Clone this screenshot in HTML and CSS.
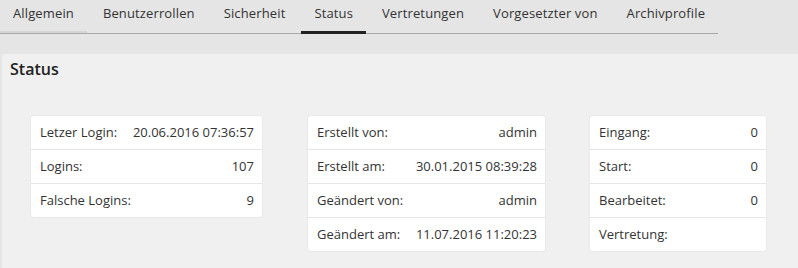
FILE: index.html
```html
<!DOCTYPE html>
<html lang="de">
<head>
<meta charset="utf-8">
<title>Status</title>
<link rel="stylesheet" href="styles.css">
</head>
<body>
<ul class="tabs">
  <li class="tab tab-hover">Allgemein</li>
  <li class="tab">Benutzerrollen</li>
  <li class="tab">Sicherheit</li>
  <li class="tab tab-active">Status</li>
  <li class="tab">Vertretungen</li>
  <li class="tab">Vorgesetzter von</li>
  <li class="tab">Archivprofile</li>
</ul>
<section class="panel">
  <h2 class="panel-title">Status</h2>
  <div class="cards">
    <div class="card card-login">
      <div class="row"><span class="label">Letzer Login:</span><span class="value">20.06.2016 07:36:57</span></div>
      <div class="row"><span class="label">Logins:</span><span class="value">107</span></div>
      <div class="row"><span class="label">Falsche Logins:</span><span class="value">9</span></div>
    </div>
    <div class="card card-meta">
      <div class="row"><span class="label">Erstellt von:</span><span class="value">admin</span></div>
      <div class="row"><span class="label">Erstellt am:</span><span class="value">30.01.2015 08:39:28</span></div>
      <div class="row"><span class="label">Geändert von:</span><span class="value">admin</span></div>
      <div class="row"><span class="label">Geändert am:</span><span class="value">11.07.2016 11:20:23</span></div>
    </div>
    <div class="card card-tasks">
      <div class="row"><span class="label">Eingang:</span><span class="value">0</span></div>
      <div class="row"><span class="label">Start:</span><span class="value">0</span></div>
      <div class="row"><span class="label">Bearbeitet:</span><span class="value">0</span></div>
      <div class="row"><span class="label">Vertretung:</span><span class="value"></span></div>
    </div>
  </div>
</section>
</body>
</html>
```
FILE: styles.css
```css
html, body {
  margin: 0;
  padding: 0;
}
body {
  background: #e5e5e5;
  font-family: "Open Sans", "DejaVu Sans", sans-serif;
  font-size: 13px;
  color: #333;
  width: 798px;
  height: 268px;
  overflow: hidden;
}
.tabs {
  list-style: none;
  margin: 0;
  padding: 0;
  display: inline-flex;
  gap: 3px;
  border-bottom: 1px solid #a8a8a8;
  height: 33px;
}
.tab {
  padding: 4px 13px 0;
  height: 27px;
  line-height: 18px;
  color: #333;
  letter-spacing: 0.13px;
  border-bottom: 2px solid transparent;
  white-space: nowrap;
}
.tab-hover {
  border-bottom-color: #d6d6d6;
}
.tab-active {
  border-bottom-color: #222;
  box-shadow: 0 1px 0 #222;
}
.panel {
  margin: 20px 0 0 2px;
  background: #f0f0f0;
  border-radius: 3px 0 0 0;
  padding: 4px 0 0 0;
  height: 210px;
  overflow: hidden;
}
.panel-title {
  margin: 0 0 0 8px;
  font-size: 16px;
  font-weight: 600;
  line-height: 22px;
  color: #222;
}
.cards {
  display: flex;
  align-items: flex-start;
  margin-top: 36px;
  padding-left: 29px;
}
.card {
  background: #fff;
  border-radius: 3px;
  box-shadow: 0 0 0 1px #e9e9e9;
}
.card-login { width: 231px; }
.card-meta { width: 237px; margin-left: 46px; }
.card-tasks { width: 176px; margin-left: 45px; }
.row {
  display: flex;
  justify-content: space-between;
  height: 33px;
  line-height: 33px;
  padding: 0 8px 0 9px;
  white-space: nowrap;
}
.row + .row {
  border-top: 1px solid #e6e6e6;
}
.value {
  text-align: right;
}
```
